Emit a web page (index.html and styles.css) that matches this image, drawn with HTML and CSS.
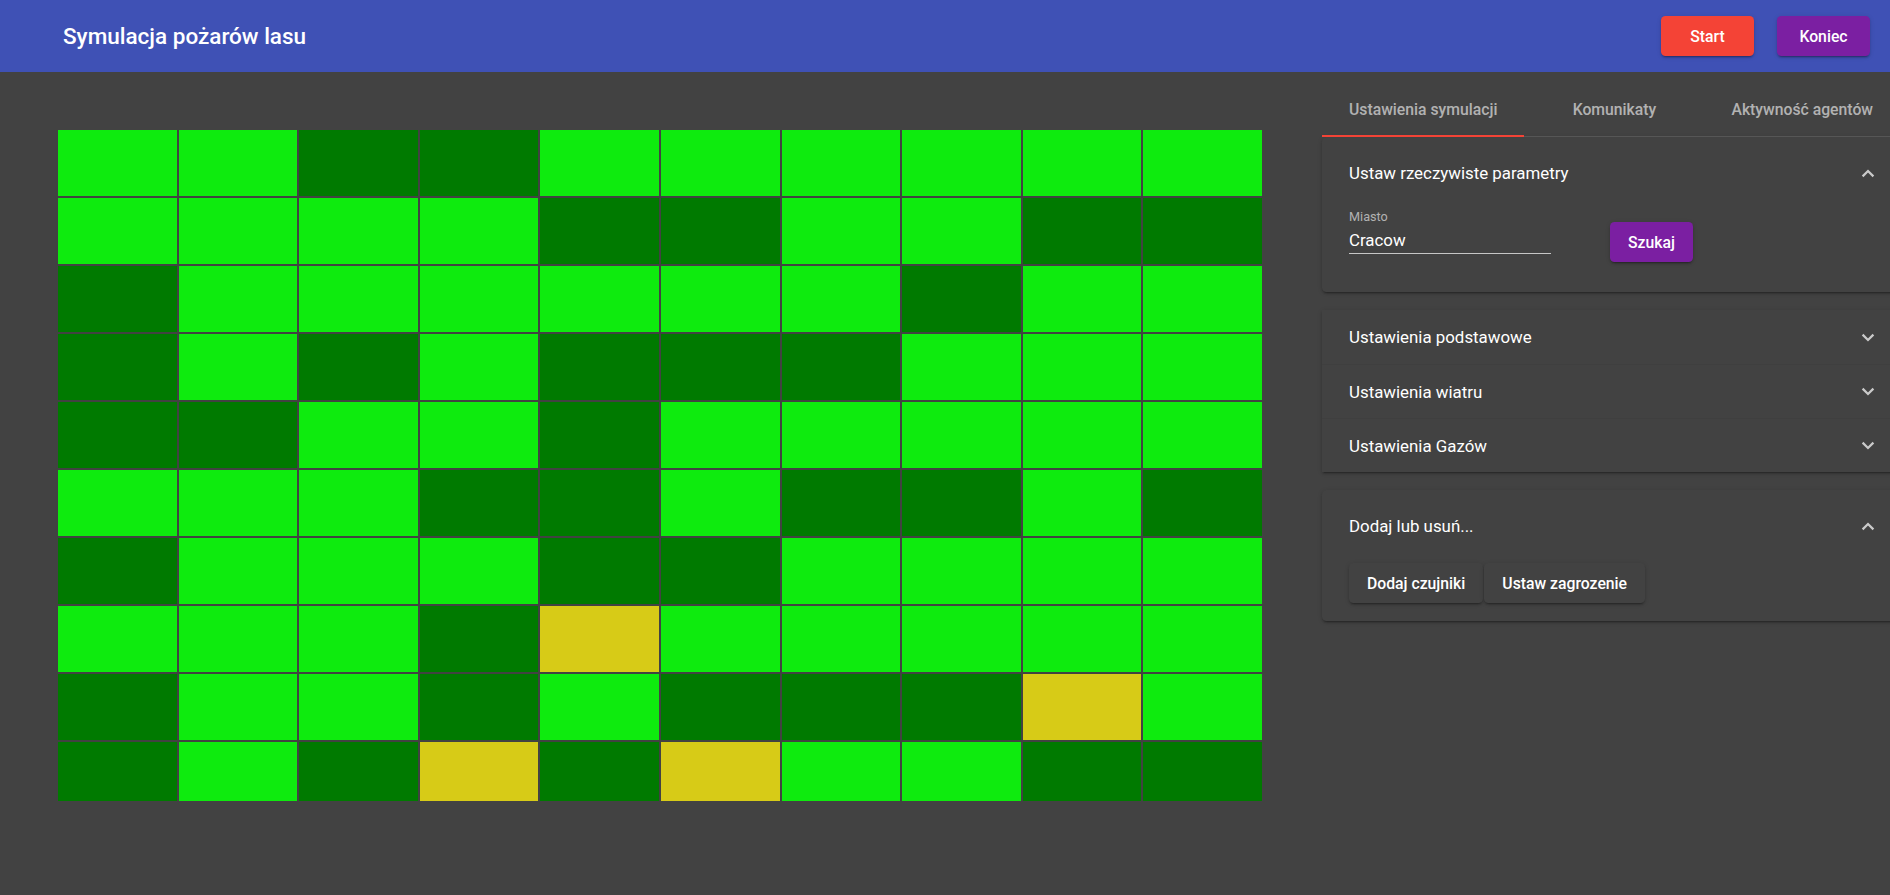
FILE: index.html
```html
<!DOCTYPE html>
<html lang="pl">
<head>
<meta charset="utf-8">
<title>Symulacja pożarów lasu</title>
<link rel="stylesheet" href="styles.css">
</head>
<body>
<header class="toolbar">
  <div class="title">Symulacja pożarów lasu</div>
  <div class="actions">
    <button class="btn btn-top warn">Start</button>
    <button class="btn btn-top accent">Koniec</button>
  </div>
</header>
<div class="main">
  <section class="board-area">
    <div class="board">
      <div class="cell l"></div><div class="cell l"></div><div class="cell d"></div><div class="cell d"></div><div class="cell l"></div><div class="cell l"></div><div class="cell l"></div><div class="cell l"></div><div class="cell l"></div><div class="cell l"></div>
      <div class="cell l"></div><div class="cell l"></div><div class="cell l"></div><div class="cell l"></div><div class="cell d"></div><div class="cell d"></div><div class="cell l"></div><div class="cell l"></div><div class="cell d"></div><div class="cell d"></div>
      <div class="cell d"></div><div class="cell l"></div><div class="cell l"></div><div class="cell l"></div><div class="cell l"></div><div class="cell l"></div><div class="cell l"></div><div class="cell d"></div><div class="cell l"></div><div class="cell l"></div>
      <div class="cell d"></div><div class="cell l"></div><div class="cell d"></div><div class="cell l"></div><div class="cell d"></div><div class="cell d"></div><div class="cell d"></div><div class="cell l"></div><div class="cell l"></div><div class="cell l"></div>
      <div class="cell d"></div><div class="cell d"></div><div class="cell l"></div><div class="cell l"></div><div class="cell d"></div><div class="cell l"></div><div class="cell l"></div><div class="cell l"></div><div class="cell l"></div><div class="cell l"></div>
      <div class="cell l"></div><div class="cell l"></div><div class="cell l"></div><div class="cell d"></div><div class="cell d"></div><div class="cell l"></div><div class="cell d"></div><div class="cell d"></div><div class="cell l"></div><div class="cell d"></div>
      <div class="cell d"></div><div class="cell l"></div><div class="cell l"></div><div class="cell l"></div><div class="cell d"></div><div class="cell d"></div><div class="cell l"></div><div class="cell l"></div><div class="cell l"></div><div class="cell l"></div>
      <div class="cell l"></div><div class="cell l"></div><div class="cell l"></div><div class="cell d"></div><div class="cell y"></div><div class="cell l"></div><div class="cell l"></div><div class="cell l"></div><div class="cell l"></div><div class="cell l"></div>
      <div class="cell d"></div><div class="cell l"></div><div class="cell l"></div><div class="cell d"></div><div class="cell l"></div><div class="cell d"></div><div class="cell d"></div><div class="cell d"></div><div class="cell y"></div><div class="cell l"></div>
      <div class="cell d"></div><div class="cell l"></div><div class="cell d"></div><div class="cell y"></div><div class="cell d"></div><div class="cell y"></div><div class="cell l"></div><div class="cell l"></div><div class="cell d"></div><div class="cell d"></div>
    </div>
  </section>
  <aside class="side">
    <nav class="tabs">
      <div class="tab active">Ustawienia symulacji</div>
      <div class="tab">Komunikaty</div>
      <div class="tab">Aktywność agentów</div>
    </nav>
    <div class="panels">
      <div class="panel expanded">
        <div class="ph">
          <span class="ph-title">Ustaw rzeczywiste parametry</span>
          <svg class="chev" width="14" height="9" viewBox="0 0 14 9"><polyline points="1.6,7.4 7,2 12.4,7.4" fill="none" stroke="currentColor" stroke-width="2.2"/></svg>
        </div>
        <div class="pb pb-row">
          <div class="field">
            <div class="field-label">Miasto</div>
            <div class="field-input">Cracow</div>
          </div>
          <button class="btn accent search">Szukaj</button>
        </div>
      </div>
      <div class="panel-group">
        <div class="panel flat">
          <div class="ph">
            <span class="ph-title">Ustawienia podstawowe</span>
            <svg class="chev" width="14" height="9" viewBox="0 0 14 9"><polyline points="1.6,1.6 7,7 12.4,1.6" fill="none" stroke="currentColor" stroke-width="2.2"/></svg>
          </div>
        </div>
        <div class="panel flat">
          <div class="ph">
            <span class="ph-title">Ustawienia wiatru</span>
            <svg class="chev" width="14" height="9" viewBox="0 0 14 9"><polyline points="1.6,1.6 7,7 12.4,1.6" fill="none" stroke="currentColor" stroke-width="2.2"/></svg>
          </div>
        </div>
        <div class="panel flat">
          <div class="ph">
            <span class="ph-title">Ustawienia Gazów</span>
            <svg class="chev" width="14" height="9" viewBox="0 0 14 9"><polyline points="1.6,1.6 7,7 12.4,1.6" fill="none" stroke="currentColor" stroke-width="2.2"/></svg>
          </div>
        </div>
      </div>
      <div class="panel expanded">
        <div class="ph">
          <span class="ph-title">Dodaj lub usuń...</span>
          <svg class="chev" width="14" height="9" viewBox="0 0 14 9"><polyline points="1.6,7.4 7,2 12.4,7.4" fill="none" stroke="currentColor" stroke-width="2.2"/></svg>
        </div>
        <div class="pb pb-buttons">
          <button class="btn plain">Dodaj czujniki</button>
          <button class="btn plain">Ustaw zagrozenie</button>
        </div>
      </div>
    </div>
  </aside>
</div>
</body>
</html>
```
FILE: styles.css
```css
html, body {
  margin: 0;
  height: 100%;
  overflow: hidden;
}
body {
  background: #424242;
  font-family: Roboto, "Noto Sans", "Liberation Sans", sans-serif;
  color: #fff;
}
.toolbar {
  height: 72px;
  box-sizing: border-box;
  background: #3f51b5;
  display: flex;
  align-items: center;
  padding: 0 20px 0 63px;
}
.title {
  flex: 1;
  font-size: 22.5px;
  font-weight: 500;
  color: #fff;
}
.actions {
  display: flex;
  gap: 23px;
}
.btn {
  height: 40px;
  border: 0;
  border-radius: 4.5px;
  padding: 0 18px;
  font-family: Roboto, "Noto Sans", sans-serif;
  font-size: 15.75px;
  font-weight: 500;
  color: #fff;
  box-shadow: 0 3px 1px -2px rgba(0,0,0,.2), 0 2px 2px 0 rgba(0,0,0,.14), 0 1px 5px 0 rgba(0,0,0,.12);
  cursor: pointer;
}
.btn-top { width: 93px; padding: 0; }
.warn { background: #f44336; }
.accent { background: #7b1fa2; }
.plain { background: #424242; }

.main {
  display: flex;
  height: 823px;
  overflow: hidden;
}
.board-area {
  flex: none;
  width: 1322px;
  box-sizing: border-box;
  padding: 58px 0 0 58px;
}
.board {
  width: 1204px;
  height: 671px;
  overflow: hidden;
  display: grid;
  grid-template-columns: repeat(10, 1fr);
  grid-auto-rows: 66px;
  gap: 2px;
}
.cell.l { background: #0eeb0e; }
.cell.d { background: #007a00; }
.cell.y { background: #d7cb17; }

.side {
  flex: none;
  width: 578px;
  padding-top: 10px;
}
.tabs {
  display: flex;
  height: 54px;
  border-bottom: 1px solid rgba(255,255,255,.12);
}
.tab {
  position: relative;
  min-width: 180px;
  box-sizing: border-box;
  padding: 0 27px;
  display: flex;
  align-items: center;
  justify-content: center;
  white-space: nowrap;
  font-size: 15.75px;
  font-weight: 500;
  color: rgba(255,255,255,.6);
}
.tab.active::after {
  content: "";
  position: absolute;
  left: 0;
  right: 0;
  bottom: -1px;
  height: 2px;
  background: #f44336;
}
.panel,
.panel-group {
  background: #424242;
  box-shadow: 0 3px 1px -2px rgba(0,0,0,.2), 0 2px 2px 0 rgba(0,0,0,.14), 0 1px 5px 0 rgba(0,0,0,.12);
}
.panel.flat {
  box-shadow: none;
  border-top: 1px solid rgba(0,0,0,.04);
}
.panel.flat:first-child { border-top: 0; }
.panel.flat + .panel.flat .ph { height: 53px; }
.panel.expanded {
  margin: 18px 0;
  border-radius: 4.5px;
}
.panel.expanded:first-child { margin-top: 0; }
.ph {
  height: 54px;
  display: flex;
  align-items: center;
  padding: 0 25px 0 27px;
  font-size: 16.875px;
  color: #fff;
}
.expanded .ph { height: 72px; }
.ph-title { flex: 1; }
.chev { color: rgba(255,255,255,.72); display: block; }
.pb { padding: 0 27px 18px; }
.pb-row {
  display: flex;
  align-items: flex-start;
}
.field { width: 202px; margin-bottom: 20px; }
.field-label {
  font-size: 12.66px;
  line-height: 15px;
  color: rgba(255,255,255,.6);
}
.field-input {
  margin-top: 6px;
  font-size: 16.875px;
  line-height: 20px;
  padding-bottom: 3px;
  border-bottom: 1px solid rgba(255,255,255,.7);
  color: #fff;
}
.search { margin: 13px 0 0 59px; }
.pb-buttons {
  padding-top: 1px;
  display: flex;
  gap: 1px;
}
```
